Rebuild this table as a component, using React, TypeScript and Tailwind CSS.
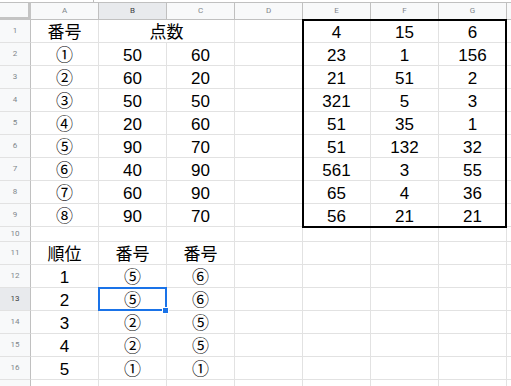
const COLS = ["A", "B", "C", "D", "E", "F", "G", "H"];

// row number -> cell values A..H ("" = empty). Row 1 has B1:C1 merged.
const ROWS: string[][] = [
  ["番号", "点数", "", "", "4", "15", "6", ""],
  ["①", "50", "60", "", "23", "1", "156", ""],
  ["②", "60", "20", "", "21", "51", "2", ""],
  ["③", "50", "50", "", "321", "5", "3", ""],
  ["④", "20", "60", "", "51", "35", "1", ""],
  ["⑤", "90", "70", "", "51", "132", "32", ""],
  ["⑥", "40", "90", "", "561", "3", "55", ""],
  ["⑦", "60", "90", "", "65", "4", "36", ""],
  ["⑧", "90", "70", "", "56", "21", "21", ""],
  ["", "", "", "", "", "", "", ""],
  ["順位", "番号", "番号", "", "", "", "", ""],
  ["1", "⑤", "⑥", "", "", "", "", ""],
  ["2", "⑤", "⑥", "", "", "", "", ""],
  ["3", "②", "⑤", "", "", "", "", ""],
  ["4", "②", "⑤", "", "", "", "", ""],
  ["5", "①", "①", "", "", "", "", ""],
  ["", "", "", "", "", "", "", ""],
];

function Cell({ value, span }: { value: string; span?: boolean }) {
  return (
    <div
      className={`flex items-center justify-center pt-[2px] border-r border-b border-[#e2e2e2] text-[17px] leading-none text-black whitespace-nowrap ${
        span ? "col-span-2" : ""
      }`}
    >
      {value}
    </div>
  );
}

export default function App() {
  return (
    <div className="relative w-[511px] h-[386px] overflow-hidden bg-white pt-[2px] font-['Liberation_Sans','Noto_Sans_CJK_JP',sans-serif]">
      {/* little handle mark above the headers */}
      <div className="absolute left-[93px] top-0 w-px h-[2px] bg-[#bdbdbd]" />

      <div className="grid grid-cols-[31px_repeat(8,68px)] grid-rows-[18px_repeat(9,23px)_15px_repeat(7,23px)]">
        {/* corner */}
        <div className="bg-[#f8f9fa] border-t border-[#c0c0c0] border-r-[3px] border-b-[3px] border-r-[#c4c4c4] border-b-[#c4c4c4]" />
        {COLS.map((c) => (
          <div
            key={c}
            className={`flex items-center justify-center border-t border-r border-b border-[#c0c0c0] text-[8px] font-['Roboto',sans-serif] ${
              c === "B" ? "bg-[#e8eaed] text-[#3c4043]" : "bg-[#f8f9fa] text-[#80868b]"
            }`}
          >
            {c}
          </div>
        ))}

        {ROWS.map((row, i) => {
          const n = i + 1;
          return [
            <div
              key={`h${n}`}
              className={`flex items-center justify-center border-r border-r-[#c0c0c0] border-b border-b-[#e2e2e2] text-[8px] font-['Roboto',sans-serif] ${
                n === 13 ? "bg-[#e8eaed] text-[#3c4043]" : "bg-[#f8f9fa] text-[#80868b]"
              }`}
            >
              {n}
            </div>,
            ...(n === 1
              ? [
                  <Cell key="1A" value={row[0]} />,
                  <Cell key="1B" value={row[1]} span />,
                  ...row.slice(3).map((v, j) => <Cell key={`1${COLS[j + 3]}`} value={v} />),
                ]
              : row.map((v, j) => <Cell key={`${n}${COLS[j]}`} value={v} />)),
          ];
        })}
      </div>

      {/* thick black border around E1:G9 */}
      <div className="absolute left-[302px] top-[19px] w-[205px] h-[209px] border-2 border-black pointer-events-none" />

      {/* selection on B13 */}
      <div className="absolute left-[98px] top-[287px] w-[69px] h-[24px] border-2 border-[#1a73e8] pointer-events-none" />
      <div className="absolute left-[162px] top-[307px] w-[7px] h-[7px] bg-[#1a73e8] border border-white" />
    </div>
  );
}
